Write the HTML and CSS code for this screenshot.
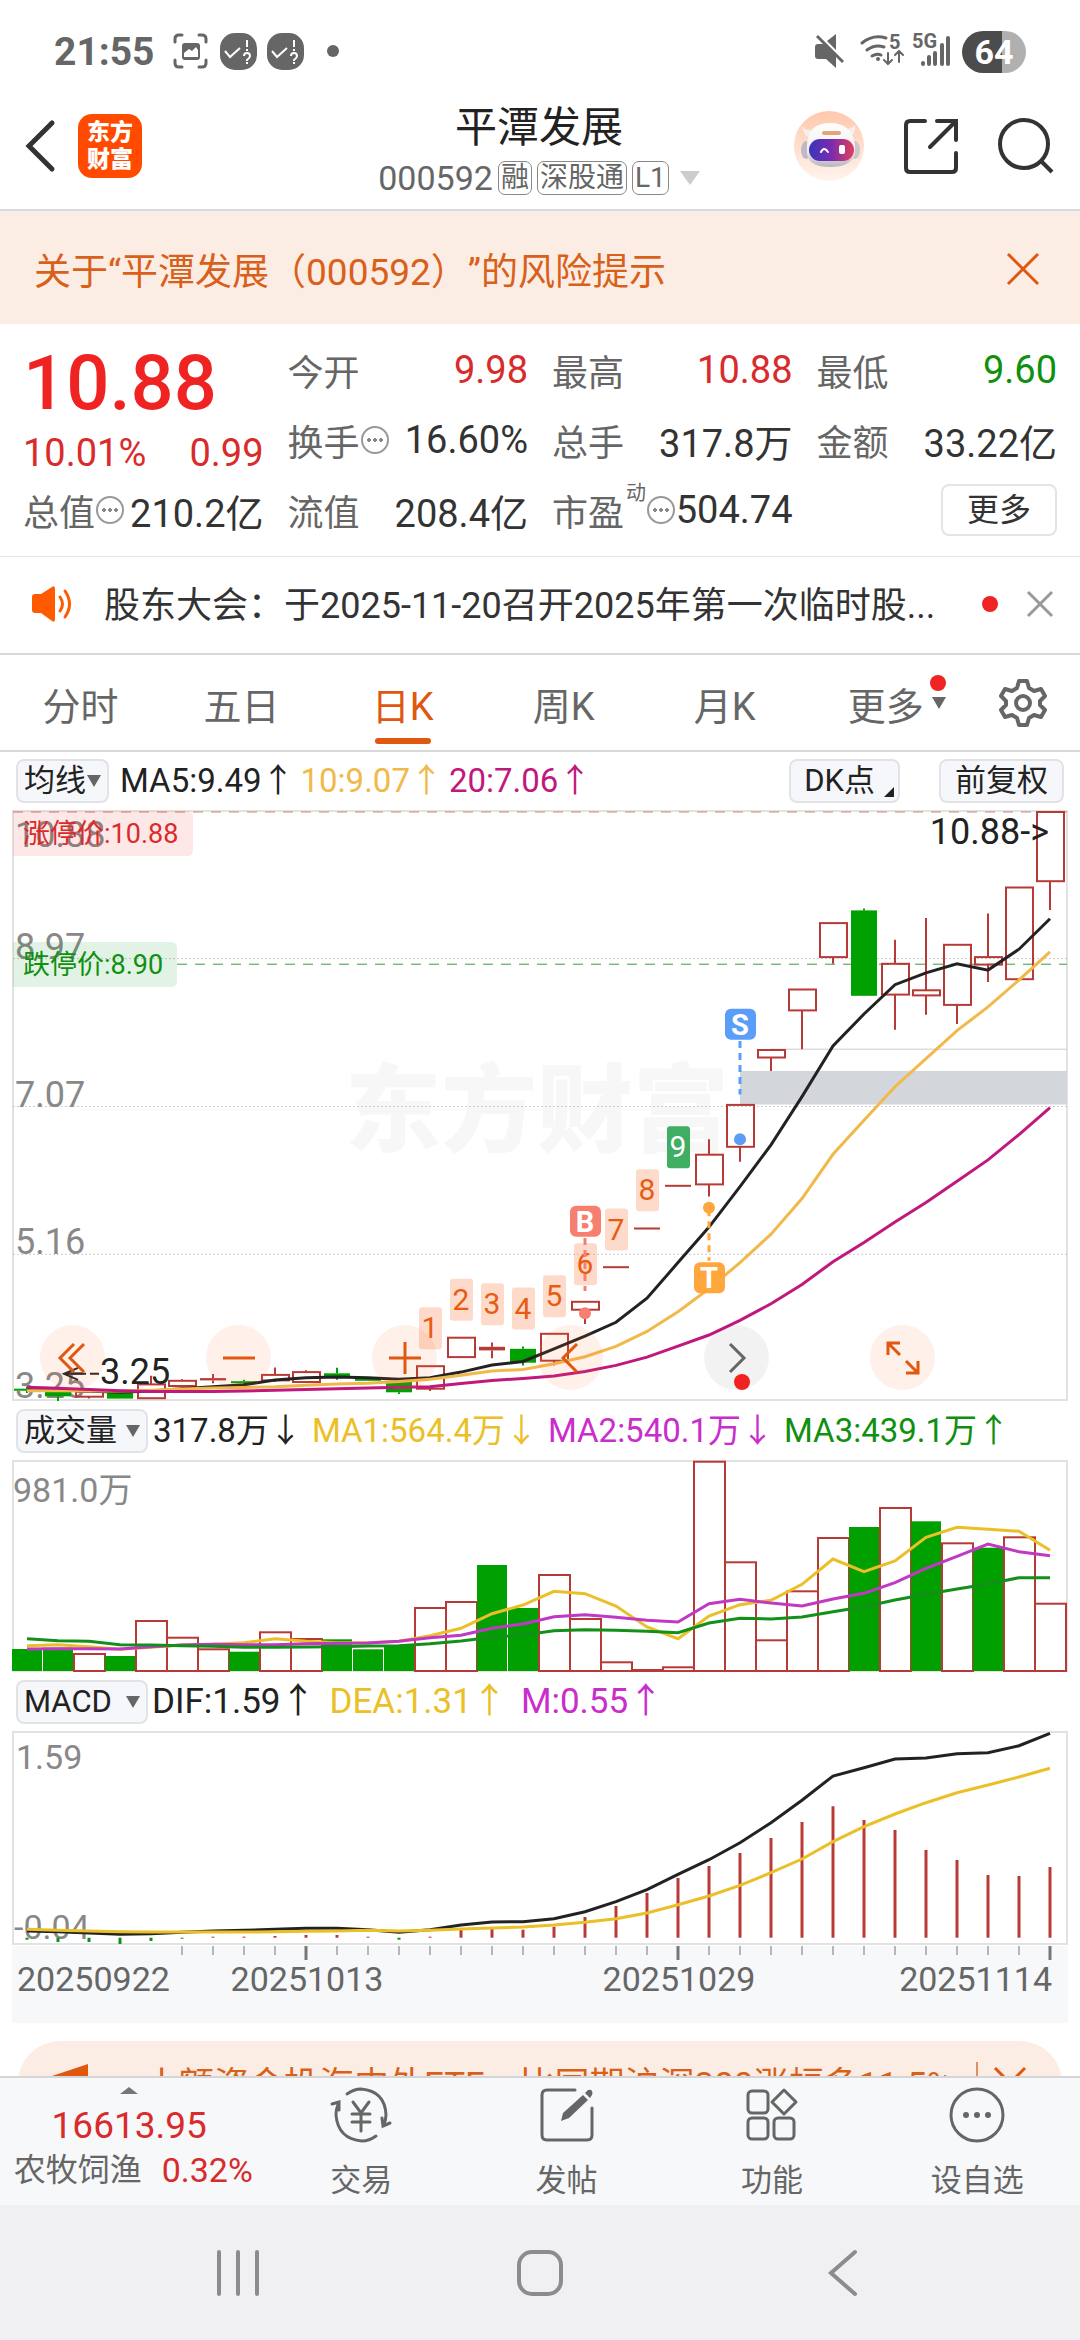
FILE: index.html
```html
<!DOCTYPE html>
<html lang="zh-CN">

<head>
	<meta charset="UTF-8">
	<meta name="viewport" content="width=device-width, initial-scale=1.0">
	<title>平潭发展 000592</title>
	<link rel="stylesheet" href="styles.css">
</head>

<body>
	<div class="status">
		<span class="clock">21:55</span>
		<svg class="status-left" width="180" height="40" viewBox="0 0 180 40">
			<g fill="none" stroke="#666" stroke-width="3" stroke-linecap="round">
				<path d="M2 10V7q0-4 4-4h3M26 3h3q4 0 4 4v3M33 28v3q0 4-4 4h-3M9 35H6q-4 0-4-4v-3" />
			</g>
			<rect x="9" y="11" width="18" height="17" rx="3" fill="#666" />
			<path d="M11 25v-4l5-4 3 2 4-4 2 3v7z" fill="#fff" />
			<rect x="47" y="1" width="37" height="37" rx="15" fill="#666" />
			<rect x="94" y="1" width="37" height="37" rx="15" fill="#666" />
			<g fill="none" stroke="#fff" stroke-width="2">
				<path d="M52 19l5 6 10-9M99 19l5 6 10-9M74 8v7M121 8v7" />
				<path d="M71 24q0-3 3-3t3 3q0 2-3 4v1M118 24q0-3 3-3t3 3q0 2-3 4v1" />
			</g>
			<path d="M73 17h2v2h-2zM73 30h2v2h-2zM120 17h2v2h-2zM120 30h2v2h-2z" fill="#fff" />
			<circle cx="160" cy="19" r="6" fill="#666" />
		</svg>
		<svg class="status-right" width="140" height="44" viewBox="0 0 140 44">
			<path d="M1 17q0-3 3-3h5l4 2 9 9v13l-10-9H4q-3 0-3-3zM13 11l9-7v16z" fill="#666" />
			<path d="M3 6l26 26" stroke="#666" stroke-width="3" />
			<g fill="none" stroke="#666" stroke-width="3" stroke-linecap="round">
				<path d="M48 13q11-9 24-5M53 20q8-6 17-3M58 26q5-3 9-1" />
				<path d="M74 23v11M70 30l4 4 4-4M85 32V21M81 25l4-4 4 4" stroke-width="2" />
			</g>
			<circle cx="64" cy="29" r="2" fill="#666" />
			<text x="75" y="19" class="tiny">5</text>
			<text x="98" y="18" class="tiny">5G</text>
			<path d="M109 34v-1M115 34v-7M121 34V23M128 34V15M134 34V8" stroke="#666" stroke-width="4" stroke-linecap="round" />
		</svg>
		<span class="battery">64</span>
	</div>

	<header>
		<div class="head-left">
			<button class="plain" aria-label="返回">
				<svg width="32" height="54" viewBox="0 0 32 54"><path d="M28 4L5 27l23 23" fill="none" stroke="#333" stroke-width="5" stroke-linecap="round" /></svg>
			</button>
			<span class="logo">东方<br>财富</span>
		</div>
		<div class="head-title">
			<h1>平潭发展</h1>
			<div class="code">000592<b>融</b><b>深股通</b><b>L1</b><i class="tri light"></i></div>
		</div>
		<div class="head-right">
			<button class="plain" aria-label="智能助手">
				<svg width="70" height="70" viewBox="0 0 70 70">
					<defs>
						<linearGradient id="halo" x2="0" y2="1"><stop offset="0" stop-color="#ffc8ac" /><stop offset="1" stop-color="#fff4ee" /></linearGradient>
						<linearGradient id="visor"><stop offset="0" stop-color="#3a35b8" /><stop offset=".5" stop-color="#7a2bb0" /><stop offset="1" stop-color="#e2405a" /></linearGradient>
						<linearGradient id="helmet" x2="0" y2="1"><stop offset="0" stop-color="#fff" /><stop offset=".6" stop-color="#f2eff2" /><stop offset="1" stop-color="#b9b5bf" /></linearGradient>
					</defs>
					<circle cx="35" cy="35" r="35" fill="url(#halo)" />
					<path d="M8 15q1 9 8 12l6-8q-9 2-14-4zM61 14q1 9-6 12l-7-8q9 1 13-4z" fill="#f6efec" />
					<ellipse cx="12" cy="39" rx="5" ry="9" fill="#bdbac3" />
					<ellipse cx="61" cy="39" rx="5" ry="9" fill="#cbc5cc" />
					<path d="M13 34Q14 12 36 12t25 22v9q-4 13-25 13T13 43z" fill="url(#helmet)" />
					<rect x="28" y="20" width="19" height="4" rx="2" fill="#dfa679" />
					<rect x="15" y="28" width="45" height="22" rx="11" fill="url(#visor)" />
					<path d="M27 41q3-6 7 0" fill="none" stroke="#fff" stroke-width="2" stroke-linecap="round" />
					<rect x="45" y="34" width="6" height="9" rx="2" fill="#fff" />
				</svg>
			</button>
			<button class="plain" aria-label="分享">
				<svg width="54" height="56" viewBox="0 0 54 56"><path d="M21 3H6Q2 3 2 7v43q0 4 4 4h42q4 0 4-4V35M33 3h19v19M52 3L26 29" fill="none" stroke="#333" stroke-width="4" stroke-linecap="round" /></svg>
			</button>
			<button class="plain" aria-label="搜索">
				<svg width="56" height="56" viewBox="0 0 56 56"><circle cx="26" cy="26" r="24" fill="none" stroke="#333" stroke-width="4" /><path d="M43 43l11 11" stroke="#333" stroke-width="4" /></svg>
			</button>
		</div>
	</header>

	<main>
		<div class="warning">
			<a href="#">关于“平潭发展（000592）”的风险提示</a>
			<button class="plain" aria-label="关闭提示">
				<svg width="34" height="34" viewBox="0 0 34 34"><path d="M2 2l30 30M32 2L2 32" stroke="#e0570f" stroke-width="3" /></svg>
			</button>
		</div>

		<section class="quote">
			<div class="now up">
				<strong>10.88</strong>
				<div><span>10.01%</span><span>0.99</span></div>
			</div>
			<div class="cell"><label>今开</label><span class="up">9.98</span></div>
			<div class="cell"><label>最高</label><span class="up">10.88</span></div>
			<div class="cell"><label>最低</label><span class="down">9.60</span></div>
			<div class="cell"><label>换手</label><i class="info"></i><span>16.60%</span></div>
			<div class="cell"><label>总手</label><span>317.8万</span></div>
			<div class="cell"><label>金额</label><span>33.22亿</span></div>
			<div class="cell"><label>总值</label><i class="info"></i><span>210.2亿</span></div>
			<div class="cell"><label>流值</label><span>208.4亿</span></div>
			<div class="cell"><label>市盈</label><sup>动</sup><i class="info"></i><span>504.74</span></div>
			<div class="cell"><button class="more">更多</button></div>
		</section>

		<div class="notice">
			<svg width="44" height="38" viewBox="0 0 44 38">
				<path d="M2 12q0-3 3-3h6L22 2q3-2 3 2v30q0 4-3 2l-11-8H5q-3 0-3-3z" fill="#ff5a00" />
				<path d="M30 12q5 7 0 14M35 6q9 13 0 26" fill="none" stroke="#ff5a00" stroke-width="3" stroke-linecap="round" />
			</svg>
			<a href="#">股东大会：于2025-11-20召开2025年第一次临时股...</a>
			<i class="dot"></i>
			<button class="plain" aria-label="关闭公告">
				<svg width="28" height="28" viewBox="0 0 28 28"><path d="M2 2l24 24M26 2L2 26" stroke="#999" stroke-width="3" /></svg>
			</button>
		</div>

		<nav class="tabs">
			<button>分时</button>
			<button>五日</button>
			<button class="active">日K</button>
			<button>周K</button>
			<button>月K</button>
			<button>更多<i class="tri small"></i><i class="dot"></i></button>
			<button class="gear" aria-label="设置">
				<svg width="50" height="50" viewBox="0 0 50 50">
					<path d="M21 3h8l2 7 5 3 7-2 4 7-5 5v4l5 5-4 7-7-2-5 3-2 7h-8l-2-7-5-3-7 2-4-7 5-5v-4l-5-5 4-7 7 2 5-3z" fill="none" stroke="#666" stroke-width="4" stroke-linejoin="round" />
					<circle cx="25" cy="25" r="7" fill="none" stroke="#666" stroke-width="4" />
				</svg>
			</button>
		</nav>

		<div class="legend first">
			<button class="pick tight">均线<i class="tri"></i></button>
			<span class="k">MA5:9.49↑</span>
			<span class="gold">10:9.07↑</span>
			<span class="plum">20:7.06↑</span>
			<button class="pick dk">DK点<i class="corner"></i></button>
			<button class="pick">前复权</button>
		</div>
		<div class="chart">
			<svg id="price" viewBox="0 0 1056 591"></svg>
			<div class="tools">
				<button aria-label="最左"><svg width="40" height="40" viewBox="0 0 40 40"><path d="M22 6L8 20l14 14M32 6L18 20l14 14" /></svg></button>
				<button aria-label="缩小"><svg width="40" height="40" viewBox="0 0 40 40"><path d="M4 20h32" /></svg></button>
				<button aria-label="放大"><svg width="40" height="40" viewBox="0 0 40 40"><path d="M4 20h32M20 4v32" /></svg></button>
				<button aria-label="左移"><svg width="40" height="40" viewBox="0 0 40 40"><path d="M26 6L12 20l14 14" /></svg></button>
				<button class="gray" aria-label="右移"><svg width="40" height="40" viewBox="0 0 40 40"><path d="M13 6l14 14-14 14" /></svg><i class="dot"></i></button>
				<button aria-label="全屏"><svg width="40" height="40" viewBox="0 0 40 40"><path d="M5 17V5h12M5 5l12 12M35 23v12H23M35 35L23 23" /></svg></button>
			</div>
		</div>

		<div class="legend">
			<button class="pick">成交量<i class="tri"></i></button>
			<span class="k">317.8万↓</span>
			<span class="yellow">MA1:564.4万↓</span>
			<span class="pink">MA2:540.1万↓</span>
			<span class="down">MA3:439.1万↑</span>
		</div>
		<div class="chart"><svg id="volume" viewBox="0 0 1056 212"></svg></div>

		<div class="legend macd">
			<button class="pick">MACD<i class="tri"></i></button>
			<span class="k">DIF:1.59↑</span>
			<span class="yellow">DEA:1.31↑</span>
			<span class="pink">M:0.55↑</span>
		</div>
		<div class="chart"><svg id="macd" viewBox="0 0 1056 292"></svg></div>

		<div class="promo">
			<svg width="46" height="40" viewBox="0 0 46 40"><path d="M44 1v38L12 28H2V15z" fill="#e0570f" /></svg>
			<a href="#">小额资金投海内外ETF，比同期沪深300涨幅多11.5%</a>
			<i class="bar"></i>
			<button class="plain" aria-label="关闭推广">
				<svg width="34" height="34" viewBox="0 0 34 34"><path d="M2 2l30 30M32 2L2 32" stroke="#e0570f" stroke-width="3" /></svg>
			</button>
		</div>
	</main>

	<footer>
		<div class="index up">
			<i class="tri upward"></i>
			<b>16613.95</b>
			<div><span class="name">农牧饲渔</span><span>0.32%</span></div>
		</div>
		<button>
			<svg width="62" height="56" viewBox="0 0 62 56">
				<path d="M17 7q7-5 14-5 24 2 25 26 0 6-3 11M46 49q-7 5-14 5Q8 52 6 28q0-7 3-12M2 17l7-2v8M60 36l-7 3-1-8M23 15l8 11 8-11M22 27h18M22 35h18M31 26v18" />
			</svg>交易
		</button>
		<button>
			<svg width="62" height="56" viewBox="0 0 62 56">
				<path d="M39 3H11Q6 3 6 8v40q0 5 5 5h40q5 0 5-5V21" />
				<path d="M25 34l2-8L47 8l5 5-19 18zM49 6l3-3q3-1 4 1t0 4l-2 3z" fill="#666" stroke="none" />
			</svg>发帖
		</button>
		<button>
			<svg width="62" height="56" viewBox="0 0 62 56">
				<rect x="7" y="4" width="20" height="22" rx="4" /><rect x="7" y="31" width="20" height="21" rx="4" /><rect x="33" y="31" width="20" height="21" rx="4" />
				<path d="M43 3l12 12-12 12-12-12z" stroke-linejoin="round" />
			</svg>功能
		</button>
		<button>
			<svg width="62" height="56" viewBox="0 0 62 56">
				<circle cx="31" cy="28" r="26" />
				<path d="M20 28h0M31 28h0M42 28h0" stroke-width="6" />
			</svg>设自选
		</button>
	</footer>
	<div class="sysnav">
		<button class="plain" aria-label="最近任务"><svg width="46" height="50" viewBox="0 0 46 50"><path d="M4 4v42M23 4v42M42 4v42" /></svg></button>
		<button class="plain" aria-label="主页"><svg width="46" height="50" viewBox="0 0 46 50"><rect x="2" y="4" width="42" height="42" rx="13" /></svg></button>
		<button class="plain" aria-label="返回上一页"><svg width="46" height="50" viewBox="0 0 46 50"><path d="M36 4L12 25l24 21" /></svg></button>
	</div>

	<script src="chart.js"></script>
</body>

</html>
```
FILE: styles.css
```css
* {
	box-sizing: border-box;
}

html,
body {
	margin: 0;
	height: 100vh;
	font-family: Roboto, "Noto Sans CJK SC", sans-serif;
	text-spacing-trim: space-all;
	color: #333;
	background: #fff;
}

body {
	display: flex;
	flex-direction: column;
	overflow: hidden;
}

button {
	font: inherit;
	color: inherit;
	border: 0 none;
	background: none;
	padding: 0;
}

svg {
	display: block;
	flex: none;
	overflow: visible;
}

a {
	color: inherit;
	text-decoration: none;
	white-space: nowrap;
}

main {
	flex: 1;
	min-height: 0;
	overflow: hidden;
}

.plain {
	display: grid;
	place-content: center;
}

.up {
	color: #d92b2b;
}

.down {
	color: #0f900f;
}

.k {
	color: #222;
}

.gold {
	color: #f0b94a;
}

.plum {
	color: #c0187c;
}

.yellow {
	color: #ebbf27;
}

.pink {
	color: #c92dcb;
}

.dot {
	flex: none;
	width: 16px;
	height: 16px;
	border-radius: 50%;
	background: #f02323;
}

.tri {
	border: 7px solid transparent;
	border-top: 12px solid #666;
	border-bottom: 0 none;
}

.tri.light {
	border-width: 14px 10px 0;
	border-top-color: #ccc;
	margin-left: 6px;
}

/* status bar */

.status {
	height: 104px;
	display: flex;
	align-items: center;
	padding: 0 54px;
	color: #666;
}

.clock {
	font-size: 39px;
	font-weight: 700;
}

.status-left {
	margin-left: 18px;
}

.status-right {
	margin: 0 8px 0 auto;
}

.tiny {
	font-size: 20px;
	font-weight: 700;
	fill: #666;
}

.battery {
	width: 64px;
	height: 42px;
	border-radius: 21px;
	background: linear-gradient(90deg, #4c4c4c 63%, #b0b0b0 63%);
	color: #fff;
	font-size: 34px;
	font-weight: 700;
	line-height: 42px;
	text-align: center;
}

/* header */

header {
	height: 107px;
	display: grid;
	grid-template-columns: 1fr auto 1fr;
	align-items: center;
	padding: 0 26px 18px 24px;
	border-bottom: 2px solid #d8d9db;
}

.head-left,
.head-right {
	display: flex;
	align-items: center;
	margin-bottom: 8px;
}

.head-left {
	gap: 22px;
}

.head-right {
	justify-content: flex-end;
	gap: 40px;
}

.logo {
	width: 64px;
	height: 64px;
	border-radius: 14px;
	background: #ff4a00;
	color: #fff;
	font-size: 23px;
	font-weight: 900;
	line-height: 27px;
	padding-top: 5px;
	text-align: center;
}

h1 {
	margin: 0;
	font-size: 42px;
	font-weight: 400;
	line-height: 48px;
	text-align: center;
	color: #222;
}

.code {
	display: flex;
	align-items: center;
	justify-content: center;
	gap: 5px;
	font-size: 34px;
	line-height: 36px;
	margin-top: 8px;
	color: #666;
}

.code b {
	height: 34px;
	border: 1px solid #888;
	border-radius: 7px;
	padding: 0 2px;
	font-size: 28px;
	font-weight: 400;
	line-height: 31px;
}

/* warning */

.warning {
	height: 113px;
	display: flex;
	align-items: center;
	justify-content: space-between;
	padding: 2px 40px 0 34px;
	background: #fcede4;
	color: #d9601a;
	font-size: 37px;
}

/* quote */

.quote {
	display: grid;
	grid-template-columns: repeat(4, 1fr);
	grid-auto-rows: 70px;
	column-gap: 24px;
	padding: 11px 23px;
	border-bottom: 1px solid #e4e4e4;
	font-size: 38px;
}

.cell {
	display: flex;
	align-items: center;
	white-space: nowrap;
}

.cell label {
	font-size: 36px;
	color: #666;
}

.cell span {
	margin-left: auto;
}

.cell sup {
	font-size: 20px;
	line-height: 20px;
	align-self: flex-start;
	margin: 8px 0 0 2px;
	color: #666;
}

.info {
	width: 28px;
	height: 28px;
	border: 2px solid #999;
	border-radius: 50%;
	margin-left: 1px;
	background:
		radial-gradient(circle at 6px 12px, #888 2px, transparent 2px),
		radial-gradient(circle at 12px 12px, #888 2px, transparent 2px),
		radial-gradient(circle at 18px 12px, #888 2px, transparent 2px);
}

.now {
	grid-row: span 2;
}

.now strong {
	display: block;
	font-size: 76px;
	font-weight: 500;
	line-height: 96px;
	color: #f02323;
}

.now div {
	display: flex;
	justify-content: space-between;
	line-height: 44px;
}

.more {
	width: 116px;
	height: 52px;
	margin-left: auto;
	border: 2px solid #e4e4e4;
	border-radius: 8px;
	font-size: 32px;
	line-height: 44px;
}

/* notice */

.notice {
	height: 98px;
	display: flex;
	align-items: center;
	padding: 0 26px 2px 30px;
	border-bottom: 2px solid #d8d8d8;
	font-size: 36px;
}

.notice a {
	margin: 0 auto 4px 30px;
}

.notice .dot {
	margin-right: 28px;
}

/* tabs */

.tabs {
	height: 97px;
	display: grid;
	grid-template-columns: repeat(6, 17fr) 12fr;
	border-bottom: 2px solid #d8d8d8;
	font-size: 38px;
	color: #666;
}

.tabs button {
	position: relative;
	padding-top: 2px;
}

.tabs .gear {
	display: grid;
	place-content: center;
	padding: 0;
}

.tabs .active {
	color: #e0570f;
}

.tabs .active::after {
	content: "";
	position: absolute;
	left: calc(50% - 28px);
	bottom: 6px;
	width: 56px;
	height: 6px;
	border-radius: 3px;
	background: #e0570f;
}

.tabs .tri,
.tabs .dot {
	position: absolute;
	right: 20px;
	top: 42px;
}

.tabs .dot {
	top: 20px;
}

/* indicator rows */

.legend {
	height: 59px;
	display: flex;
	align-items: center;
	gap: 10px;
	padding: 0 16px;
	font-size: 33px;
	line-height: 44px;
	white-space: nowrap;
}

.legend.first {
	height: 58px;
	gap: 6px;
}

.legend.macd {
	gap: 14px;
	font-size: 35px;
}

.pick {
	display: flex;
	align-items: center;
	gap: 9px;
	height: 44px;
	padding: 0 6px;
	margin-right: -5px;
	border: 2px solid #e2e3e6;
	border-radius: 8px;
	background: #f6f7fa;
	font-size: 31px;
	color: #222;
}

.macd .pick {
	gap: 14px;
	margin-right: -10px;
}

.pick.tight {
	gap: 1px;
	margin-right: 5px;
}

.pick.dk {
	margin: 0 33px 0 auto;
	padding: 0 4px 0 13px;
}

.dk ~ .pick {
	margin: 0;
	padding: 0 14px;
}

.corner {
	align-self: flex-end;
	margin-bottom: 4px;
	border: 5px solid #222;
	border-top-color: transparent;
	border-left-color: transparent;
}

/* charts */

.chart {
	position: relative;
	padding: 0 12px;
}

.chart svg {
	width: 100%;
}

.chart text {
	font-size: 34px;
	fill: #888;
}

.chart .big {
	font-size: 36px;
}

.chart .ink {
	fill: #222;
}

.chart .limit {
	font-size: 27px;
}

.chart .date {
	fill: #666;
}

.chart .watermark {
	font-size: 96px;
	font-weight: 900;
	fill: #f7f7f7;
}

.chart .count {
	font-size: 30px;
	text-anchor: middle;
	fill: #e85c12;
}

.chart .mark {
	font-size: 29px;
	font-weight: 700;
	text-anchor: middle;
	fill: #fff;
}

.tools {
	position: absolute;
	left: 3.7%;
	right: 13.4%;
	bottom: 11px;
	display: flex;
	justify-content: space-between;
}

.tools button {
	position: relative;
	width: 65px;
	height: 65px;
	border-radius: 50%;
	display: grid;
	place-content: center;
	background: rgba(255, 110, 40, .1);
}

.tools .gray {
	background: rgba(0, 0, 0, .05);
}

.tools svg {
	width: 40px;
	fill: none;
	stroke: #e0570f;
	stroke-width: 3;
}

.tools .gray svg {
	stroke: #666;
}

.tools .dot {
	position: absolute;
	left: 30px;
	bottom: 0;
}

/* promo strip */

.promo {
	display: flex;
	align-items: center;
	height: 84px;
	margin: 18px 18px 0;
	padding: 0 35px 0 26px;
	border-radius: 42px;
	background: #fcede4;
	color: #d9601a;
	font-size: 35px;
}

.promo a {
	flex: 1;
	min-width: 0;
	overflow: hidden;
	margin-left: 54px;
	padding-bottom: 4px;
}

.promo .bar {
	width: 2px;
	height: 42px;
	margin: 0 15px 0 22px;
	background: #e0905c;
}

/* bottom bar */

footer {
	flex: none;
	height: 129px;
	display: grid;
	grid-template-columns: 258fr repeat(4, 205fr);
	border-top: 2px solid #d4d5d8;
	background: #f7f8fa;
	color: #666;
	font-size: 31px;
}

footer button {
	display: flex;
	flex-direction: column;
	align-items: center;
	gap: 15px;
	padding-top: 9px;
	line-height: 46px;
}

footer svg {
	fill: none;
	stroke: #666;
	stroke-width: 3;
	stroke-linecap: round;
}

.index {
	display: flex;
	flex-direction: column;
	align-items: center;
	padding-top: 9px;
}

.tri.upward {
	border-width: 0 9px 7px;
	border-bottom: 7px solid #777;
}

.index b {
	font-size: 37px;
	font-weight: 400;
	line-height: 42px;
	margin-top: 11px;
}

.index div {
	display: flex;
	gap: 20px;
	padding-left: 8px;
	font-size: 34px;
	line-height: 46px;
	white-space: nowrap;
}

.index .name {
	font-size: 32px;
	color: #666;
}

.sysnav {
	flex: none;
	height: 135px;
	display: grid;
	grid-template-columns: repeat(3, 28%);
	justify-content: center;
	background: #f0f0f2;
}

.sysnav svg {
	fill: none;
	stroke: #8c8c8c;
	stroke-width: 4;
	stroke-linecap: round;
}
```
FILE: chart.js
```js
const RED = '#b83a36'
const GREEN = '#00a000'
const STEP = 31

const x = i => 15 + STEP * i
const line = (pts, y, color) =>
	`<polyline points="${pts.map((v, i) => x(i) + ',' + y(v)).join(' ')}" fill="none" stroke="${color}" stroke-width="3"/>`
const rule = (x1, x2, y, color, dash) =>
	`<path d="M${x1} ${y}H${x2}" stroke="${color}" stroke-dasharray="${dash}" fill="none"/>`
const frame = (h) => `<rect x="1" y="1" width="1054" height="${h}" fill="none" stroke="#e2e2e2" stroke-width="2"/>`

// levels count down from the top of the scale
// [kind, body top, body bottom, wick top, wick bottom]
const candles = [
	['g', 1489, 1494, 1484, 1500], ['g', 1495, 1508, 1495, 1520], ['r', 1497, 1509, 1497, 1514],
	['g', 1499, 1514, 1499, 1514], ['r', 1478, 1513, 1456, 1513], ['r', 1469, 1482, 1465, 1500],
	['s', 1462, 1468, 1452, 1475], ['g', 1470, 1475, 1466, 1480], ['r', 1454, 1468, 1435, 1472],
	['r', 1447, 1472, 1442, 1472], ['g', 1450, 1458, 1436, 1466], ['g', 1461, 1469, 1461, 1469],
	['g', 1470, 1498, 1470, 1502], ['r', 1432, 1489, 1432, 1495], ['r', 1360, 1409, 1360, 1409],
	['s', 1383, 1392, 1372, 1412], ['g', 1388, 1423, 1382, 1430], ['r', 1350, 1418, 1350, 1430],
	['r', 1269, 1289, 1269, 1325], ['s', 1179, 1183, 1179, 1183], ['s', 1081, 1085, 1081, 1085],
	['s', 973, 977, 973, 977], ['r', 897, 972, 858, 1003], ['r', 771, 877, 771, 915],
	['r', 632, 651, 632, 685], ['r', 479, 532, 479, 630], ['r', 311, 397, 311, 414],
	['g', 279, 495, 274, 495], ['r', 414, 492, 353, 581], ['r', 481, 494, 298, 543],
	['r', 366, 518, 366, 566], ['r', 397, 416, 287, 460], ['r', 221, 453, 221, 453],
	['r', 30, 205, 30, 278]
]
const ma5 = [1488, 1492, 1495, 1498, 1495, 1489, 1484, 1479, 1467, 1461, 1459, 1461, 1465, 1461, 1447, 1429, 1420, 1388, 1356, 1321, 1260, 1170, 1080, 978, 872, 750, 622, 541, 467, 437, 414, 430, 377, 300]
const ma10 = [1494, 1494, 1495, 1495, 1493, 1490, 1487, 1486, 1484, 1480, 1477, 1475, 1471, 1465, 1455, 1444, 1440, 1426, 1408, 1382, 1344, 1294, 1236, 1170, 1098, 1008, 896, 810, 725, 654, 583, 523, 455, 384]
const ma20 = [1485, 1488, 1491, 1494, 1496, 1496, 1496, 1495, 1493, 1491, 1489, 1487, 1485, 1484, 1476, 1468, 1463, 1457, 1445, 1430, 1409, 1381, 1353, 1316, 1274, 1225, 1168, 1119, 1067, 1018, 964, 910, 846, 778]

function drawPrice() {
	const y = v => Math.round((v - 25) * 591 / 149.5) / 10
	let s = `<text class="watermark" x="333" y="334">东方财富</text>`
	s += frame(589)
	s += [401, 775, 1149].map(v => rule(1, 1055, y(v), '#ccc', '2 2')).join('')
	s += rule(758, 1055, y(630), '#ccc', 'none')
	s += `<rect x="728" y="${y(685)}" width="327" height="${y(770) - y(685)}" fill="#d3d6db"/>`
	const labels = [['10.88', 118], ['8.97', 401], ['7.07', 775], ['5.16', 1147], ['3.25', 1512]]
	s += labels.map(l => `<text class="big" x="3" y="${y(l[1])}">${l[0]}</text>`).join('')
	s += rule(1, 1055, 2, '#d08468', '10 8') + rule(165, 1055, y(415), '#3a9a3a', '10 8')
	s += `<path d="M1 1h174q6 0 6 6v33q0 6-6 6H1z" fill="#f02323" fill-opacity=".11"/>`
	s += `<path d="M1 132h158q6 0 6 6v33q0 6-6 6H1z" fill="#0fa030" fill-opacity=".12"/>`
	s += `<text class="limit" x="11" y="33" style="fill:#d92b2b">涨停价:10.88</text>`
	s += `<text class="limit" x="11" y="164" style="fill:#0f900f">跌停价:8.90</text>`

	candles.forEach(([kind, top, bottom, high, low], i) => {
		const color = kind == 'g' ? GREEN : RED
		const h = Math.max(y(bottom) - y(top), 2)
		s += `<path d="M${x(i)} ${y(high)}V${y(top)}M${x(i)} ${y(bottom)}V${y(low)}" stroke="${color}" stroke-width="2"/>`
		if (kind == 'r') {
			s += `<rect x="${x(i) - 13}" y="${y(top)}" width="27" height="${h}" fill="none" stroke="${color}" stroke-width="2"/>`
		} else {
			s += `<rect x="${x(i) - 13}" y="${y(top)}" width="26" height="${h}" fill="${color}"/>`
		}
	})
	s += line(ma5, y, '#222') + line(ma10, y, '#f0b94a') + line(ma20, y, '#c0187c')

	// nine-turn counters above the candles
	const tops = [1283, 1211, 1222, 1233, 1202, 1121, 1033, 934, 825]
	tops.forEach((t, n) => {
		const last = n == 8
		s += `<rect x="${x(13 + n) - 11}" y="${y(t)}" width="23" height="42" rx="3" fill="${last ? '#3fae62' : '#f97a3c'}" fill-opacity="${last ? 1 : .28}"/>`
		s += `<text class="count" x="${x(13 + n)}" y="${y(t) + 31}" ${last ? 'style="fill:#fff"' : ''}>${n + 1}</text>`
	})

	// [letter, index, badge top, dash from, dash to, dot, color]
	const marks = [
		['B', 18, 1026, 1108, 1242, 1298, '#f67f6f'],
		['T', 22, 1169, 1035, 1165, 1031, '#ffa63c'],
		['S', 23, 528, 609, 745, 858, '#5b9df8']
	]
	marks.forEach(([name, i, top, from, to, dot, color]) => {
		s += `<path d="M${x(i)} ${y(from)}V${y(to)}" stroke="${color}" stroke-width="3" stroke-dasharray="7 5"/>`
		s += `<circle cx="${x(i)}" cy="${y(dot)}" r="6" fill="${color}"/>`
		s += `<rect x="${x(i) - 15}" y="${y(top)}" width="31" height="31" rx="6" fill="${color}"/>`
		s += `<text class="mark" x="${x(i)}" y="${y(top) + 26}">${name}</text>`
	})
	s += `<text class="big ink" x="1037" y="34" text-anchor="end">10.88-&gt;</text>`
	s += `<text class="big ink" x="88" y="${y(1478)}">3.25</text>`
	s += `<path d="M66 ${y(1436)}l-14 6 14 6M54 ${y(1436) + 6}h20M78 ${y(1436) + 6}h9" stroke="#222" stroke-width="2" fill="none"/>`
	document.getElementById('price').innerHTML = s
}

const volumes = [747, 743, 762, 768, 663, 713, 748, 755, 697, 717, 718, 748, 736, 624, 606, 495, 624, 525, 657, 787, 810, 802, 185, 487, 721, 574, 414, 381, 324, 364, 430, 443, 412, 611]
const falling = [0, 1, 3, 7, 10, 11, 12, 15, 16, 27, 29, 31]
const vma1 = [737, 734, 740, 748, 742, 735, 733, 728, 716, 724, 728, 728, 724, 707, 685, 641, 615, 574, 581, 618, 681, 716, 648, 614, 601, 553, 477, 515, 483, 412, 382, 388, 394, 451]
const vma2 = [747, 746, 746, 747, 740, 735, 733, 734, 734, 731, 730, 729, 724, 713, 706, 685, 672, 650, 644, 652, 661, 666, 611, 598, 609, 618, 597, 580, 548, 505, 469, 432, 455, 467]
const vma3 = [716, 722, 724, 734, 735, 737, 739, 742, 742, 741, 740, 738, 737, 731, 723, 712, 705, 692, 689, 691, 694, 698, 669, 655, 657, 651, 635, 620, 600, 583, 567, 552, 533, 533]

function drawVolume() {
	const y = v => Math.round((v - 180) / .3) / 10
	let s = frame(210) + `<text x="1" y="42">981.0万</text>`
	volumes.forEach((v, i) => {
		const h = 211 - y(v)
		if (falling.includes(i)) {
			s += `<rect x="${x(i) - 15}" y="${y(v)}" width="30" height="${h}" fill="${GREEN}"/>`
		} else {
			s += `<rect x="${x(i) - 15}" y="${y(v)}" width="31" height="${h}" fill="none" stroke="${RED}" stroke-width="2"/>`
		}
	})
	s += line(vma1, y, '#ebbf27') + line(vma2, y, '#c038c4') + line(vma3, y, '#12901a')
	document.getElementById('volume').innerHTML = s
}

const dif = [750, 752, 756, 760, 758, 754, 750, 748, 745, 742, 742, 746, 754, 746, 732, 723, 722, 713, 692, 662, 626, 580, 536, 485, 425, 358, 285, 260, 234, 231, 218, 215, 194, 157]
const dea = [745, 748, 750, 752, 753, 753, 753, 753, 752, 751, 750, 748, 750, 748, 744, 741, 738, 732, 724, 713, 696, 671, 645, 613, 575, 534, 482, 437, 399, 365, 335, 312, 288, 262]
const bars = [776, 783, 783, 789, 780, 773, 767, 767, 765, 762, 762, 767, 776, 767, 744, 738, 746, 737, 708, 675, 636, 591, 555, 516, 471, 423, 376, 417, 447, 507, 537, 582, 585, 558]

function drawMacd() {
	const y = v => Math.round((v - 150) / .3) / 10
	let s = `<rect y="215" width="1056" height="77" fill="#f7f8fa"/>` + frame(212)
	s += `<text x="4" y="38">1.59</text><text x="2" y="208">-0.04</text>`
	bars.forEach((v, i) => {
		s += `<path d="M${x(i)} ${y(770)}V${y(v)}" stroke="${v > 770 ? '#12901a' : RED}" stroke-width="3"/>`
	})
	s += line(dif, y, '#222') + line(dea, y, '#ebbf27')
	for (let i = 5; i < 34; i++) {
		const major = i % 12 == 9
		s += `<path d="M${x(i)} 215v${major ? 14 : 9}" stroke="#777" stroke-width="${major ? 3 : 1}"/>`
	}
	s += `<text class="date" x="5" y="260">20250922</text>`
	s += `<text class="date" x="295" y="260" text-anchor="middle">20251013</text>`
	s += `<text class="date" x="667" y="260" text-anchor="middle">20251029</text>`
	s += `<text class="date" x="1040" y="260" text-anchor="end">20251114</text>`
	document.getElementById('macd').innerHTML = s
}

drawPrice()
drawVolume()
drawMacd()
```
